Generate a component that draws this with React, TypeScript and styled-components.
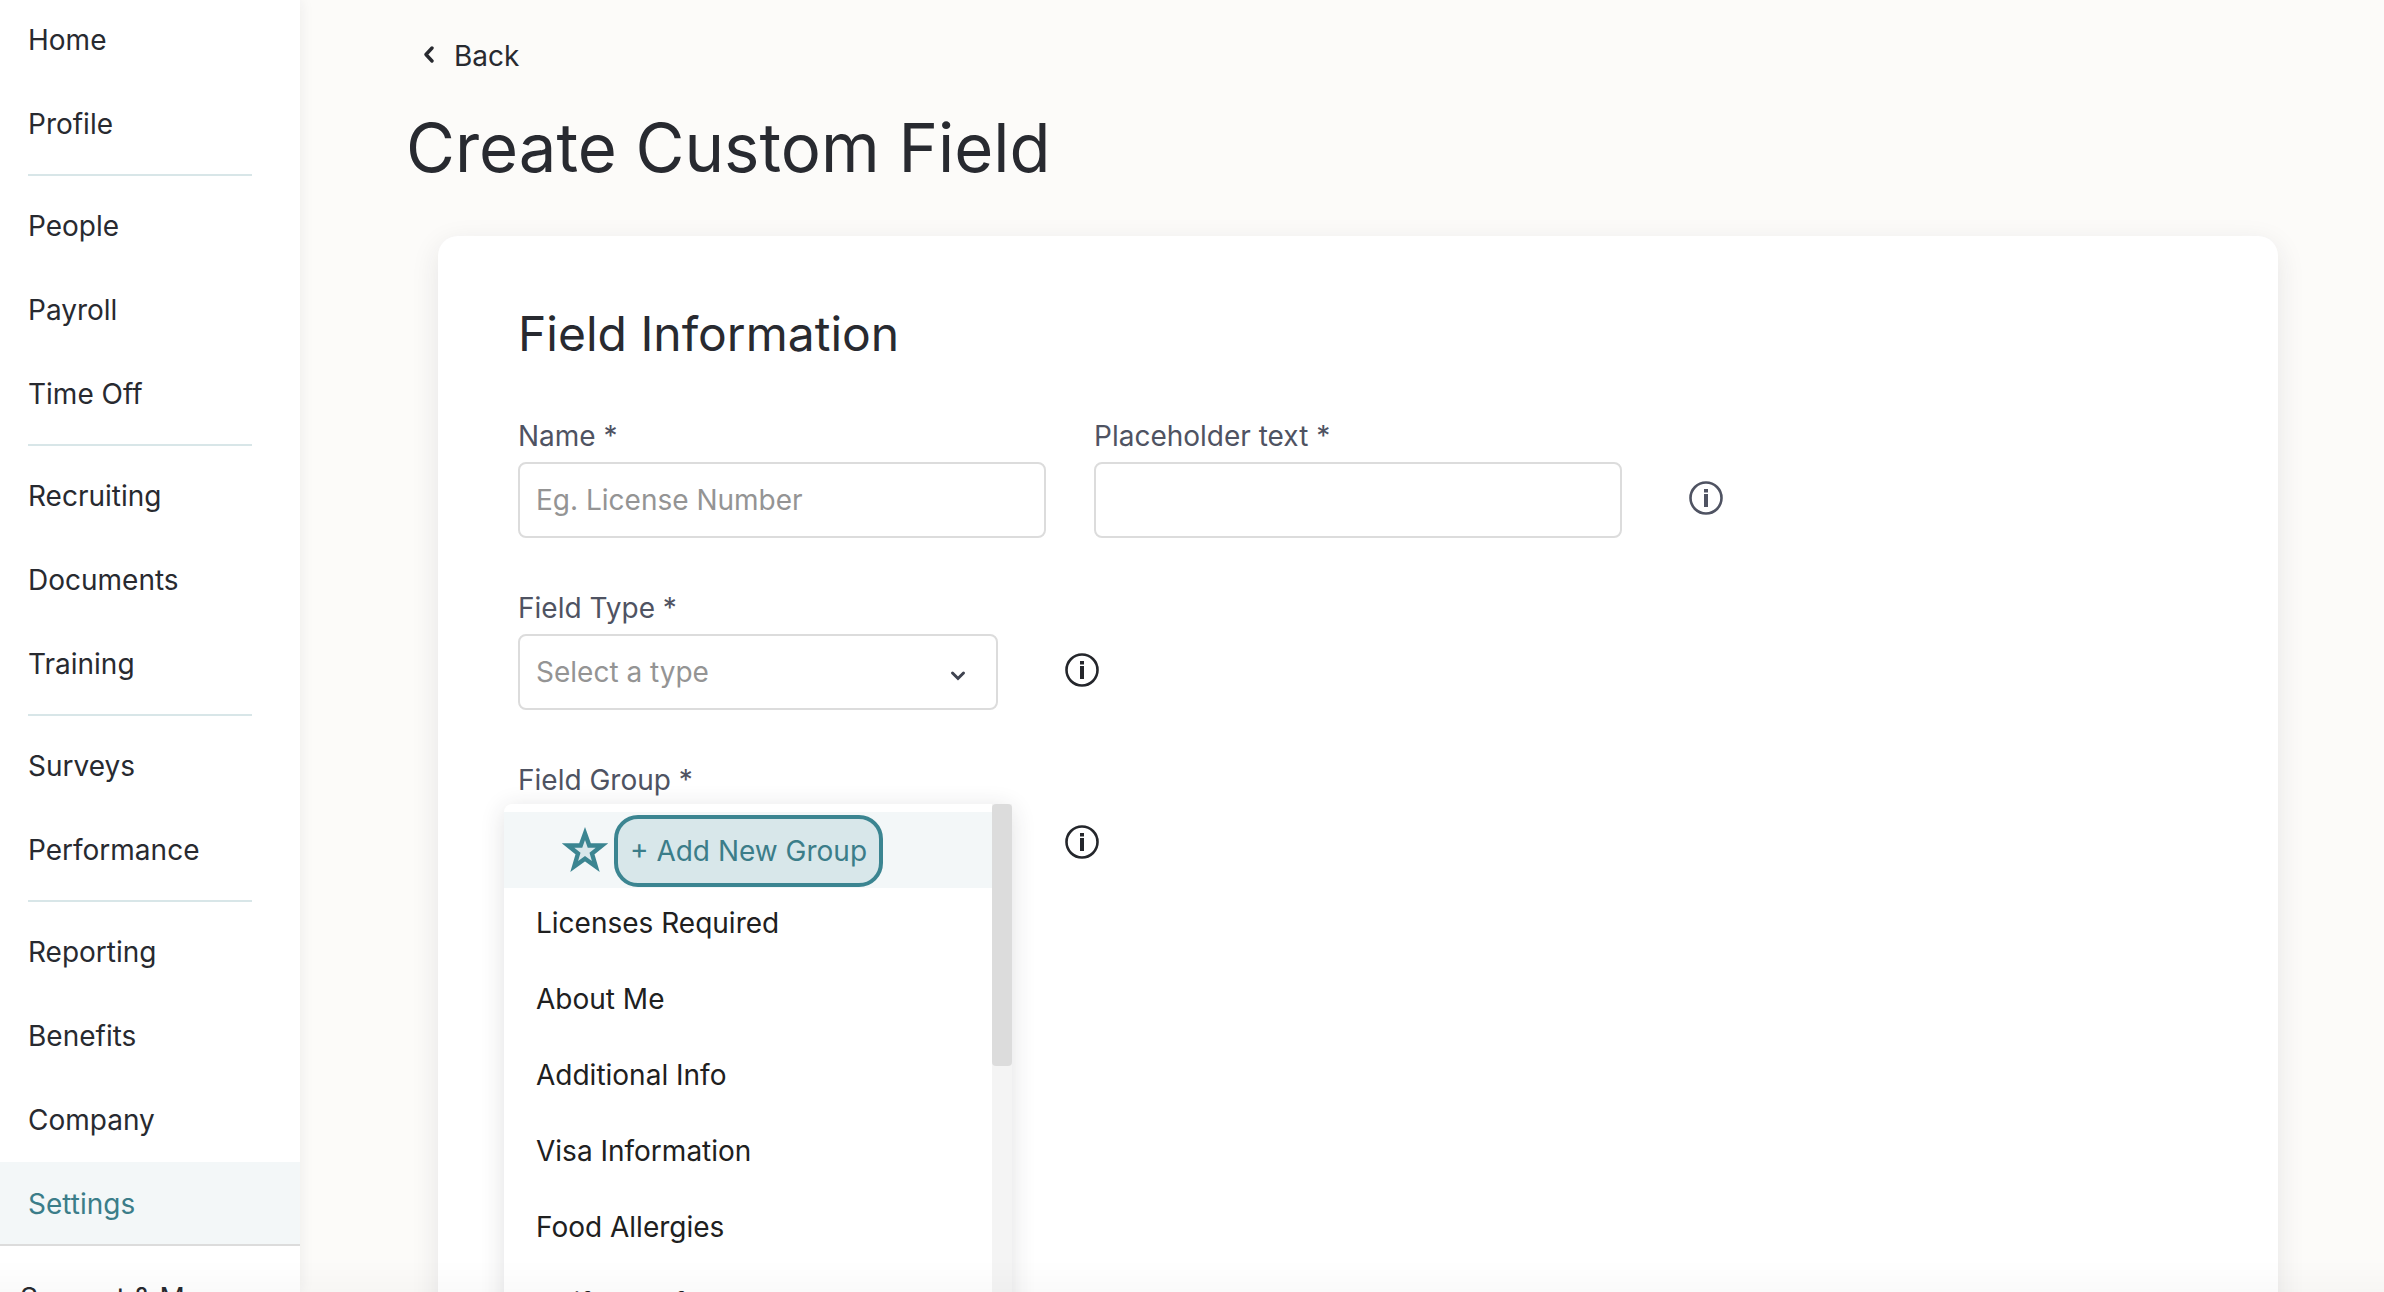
import React from "react";
import styled, { createGlobalStyle } from "styled-components";

const Global = createGlobalStyle`
  *, *::before, *::after { box-sizing: border-box; }
  html, body, #root { height: 100%; }
  body {
    margin: 0;
    overflow: hidden;
    background: #fcfbf9;
    color: #282a30;
    font: 400 28px/40px Inter, "Liberation Sans", sans-serif;
    -webkit-font-smoothing: antialiased;
  }
`;

const Shell = styled.div`
  display: flex;
  height: 100vh;
  overflow: hidden;
`;

const Sidebar = styled.aside`
  display: flex;
  flex: 0 0 300px;
  flex-direction: column;
  background: #fff;
  box-shadow: 0 0 14px rgba(40, 42, 48, 0.08);
`;

const NavList = styled.nav`
  display: flex;
  flex-direction: column;
  margin-top: -2px;
`;

const NavLink = styled.a<{ $active?: boolean }>`
  display: flex;
  flex: none;
  align-items: center;
  height: 84px;
  padding: 0 28px;
  color: ${(p) => (p.$active ? "#3b7d89" : "#282a30")};
  background: ${(p) => (p.$active ? "#f3f7f8" : "transparent")};
  text-decoration: none;
`;

const Divider = styled.hr`
  flex: none;
  width: 224px;
  height: 2px;
  margin: 8px 28px;
  border: 0;
  background: #d8e6e8;
`;

const SidebarFooter = styled.div`
  flex: none;
  margin-top: -2px;
  padding: 32px 20px;
  border-top: 2px solid #dcdcdc;
  background: #fff;
`;

const FooterLink = styled.a`
  color: #282a30;
  text-decoration: none;
`;

const Main = styled.main`
  display: flex;
  flex: 1;
  flex-direction: column;
  min-width: 0;
  padding: 36px 106px 0;
`;

const BackLink = styled.a`
  display: flex;
  align-items: center;
  gap: 18px;
  padding-left: 16px;
  color: #282a30;
  text-decoration: none;
`;

const Title = styled.h1`
  margin: 32px 0 48px;
  font-size: 67px;
  font-weight: 400;
  line-height: 80px;
`;

const Card = styled.form`
  flex: 1 0 auto;
  min-height: 1200px;
  margin-left: 32px;
  padding: 68px 80px;
  border-radius: 20px;
  background: #fff;
  box-shadow: 0 8px 28px rgba(40, 42, 48, 0.1);
`;

const SectionTitle = styled.h2`
  margin: 0 0 52px;
  font-size: 48px;
  font-weight: 400;
  line-height: 60px;
`;

const FieldRow = styled.div`
  display: flex;
  align-items: flex-end;
  gap: 48px;
  margin-bottom: 50px;
`;

const Field = styled.div<{ $width: number }>`
  position: relative;
  display: flex;
  flex: 0 1 ${(p) => p.$width}px;
  flex-direction: column;
  gap: 6px;
`;

const Label = styled.label`
  color: #4f5362;
`;

const Control = styled.input`
  width: 100%;
  height: 76px;
  padding: 0 16px;
  border: 2px solid #dcdcdc;
  border-radius: 8px;
  background: #fff;
  color: #282a30;
  font: inherit;
  &::placeholder { color: #949494; opacity: 1; }
`;

const SelectWrap = styled.div`
  position: relative;
`;

const Select = styled.select`
  display: block;
  width: 100%;
  height: 76px;
  padding: 0 16px;
  border: 2px solid #dcdcdc;
  border-radius: 8px;
  appearance: none;
  background: #fff;
  color: #949494;
  font: inherit;
`;

const SelectArrow = styled.svg`
  position: absolute;
  top: 36px;
  right: 32px;
  pointer-events: none;
`;

const InfoButton = styled.button<{ $tone: string }>`
  display: flex;
  margin: 0 0 22px 18px;
  padding: 0;
  border: 0;
  background: none;
  color: ${(p) => p.$tone};
`;

const Menu = styled.div`
  position: absolute;
  top: 44px;
  left: -14px;
  display: flex;
  width: 508px;
  height: 800px;
  border-radius: 8px;
  background: #fff;
  box-shadow: 0 4px 24px rgba(40, 42, 48, 0.14);
`;

const MenuList = styled.div`
  flex: 1;
  padding-top: 8px;
`;

const MenuItem = styled.div`
  display: flex;
  align-items: center;
  height: 76px;
  padding: 0 32px 6px;
  color: #202020;
`;

const NewGroupItem = styled(MenuItem)`
  gap: 4px;
  padding: 2px 56px 0;
  background: #f3f7f8;
`;

const NewGroupButton = styled.button`
  height: 72px;
  padding: 0 12px;
  border: 4px solid #3b8591;
  border-radius: 24px;
  background: #d8e7ea;
  color: #3b7d89;
  font: inherit;
  white-space: nowrap;
`;

const ScrollTrack = styled.div`
  flex: 0 0 20px;
  background: #f4f4f4;
`;

const ScrollThumb = styled.div`
  height: 262px;
  border-radius: 4px;
  background: #dcdcdc;
`;

const BottomFade = styled.div`
  position: fixed;
  inset: auto 0 0;
  height: 32px;
  background: linear-gradient(rgba(0, 0, 0, 0), rgba(0, 0, 0, 0.02));
  pointer-events: none;
`;

const NAV = [
  ["Home", "Profile"],
  ["People", "Payroll", "Time Off"],
  ["Recruiting", "Documents", "Training"],
  ["Surveys", "Performance"],
  ["Reporting", "Benefits", "Company", "Settings"],
];

const GROUPS = ["Licenses Required", "About Me", "Additional Info", "Visa Information", "Food Allergies", "Uniform Info"];

function Info({ tone }: { tone: string }) {
  return (
    <InfoButton type="button" aria-label="More information" $tone={tone}>
      <svg width="36" height="36" viewBox="0 0 36 36" fill="none">
        <circle cx="18" cy="18" r="15.5" stroke="currentColor" strokeWidth="2.6" />
        <path d="M16 9h4v3.500h-4zM16 14h4V27h-4z" fill="currentColor" />
      </svg>
    </InfoButton>
  );
}

export default function App() {
  return (
    <>
      <Global />
      <Shell>
        <Sidebar>
          <NavList>
            {NAV.map((group, i) => (
              <React.Fragment key={i}>
                {i > 0 && <Divider />}
                {group.map((name) => (
                  <NavLink key={name} href="#" $active={name === "Settings"}>{name}</NavLink>
                ))}
              </React.Fragment>
            ))}
          </NavList>
          <SidebarFooter>
            <FooterLink href="#">Support &amp; More</FooterLink>
          </SidebarFooter>
        </Sidebar>
        <Main>
          <BackLink href="#">
            <svg width="14" height="20" viewBox="0 0 14 20" fill="none">
              <path d="M10 2 4 8.500l6 6.500" stroke="currentColor" strokeWidth="3.400" strokeLinecap="round" strokeLinejoin="round" />
            </svg>
            Back
          </BackLink>
          <Title>Create Custom Field</Title>
          <Card>
            <SectionTitle>Field Information</SectionTitle>
            <FieldRow>
              <Field $width={528}>
                <Label htmlFor="name">Name *</Label>
                <Control id="name" placeholder="Eg. License Number" />
              </Field>
              <Field $width={528}>
                <Label htmlFor="placeholder">Placeholder text *</Label>
                <Control id="placeholder" />
              </Field>
              <Info tone="#4f5362" />
            </FieldRow>
            <FieldRow>
              <Field $width={480}>
                <Label htmlFor="type">Field Type *</Label>
                <SelectWrap>
                  <Select id="type"><option>Select a type</option></Select>
                  <SelectArrow width="16" height="12" viewBox="0 0 16 12" fill="none">
                    <path d="m2.500 3 5.500 5.500L13.500 3" stroke="#3f4350" strokeWidth="3" strokeLinecap="round" />
                  </SelectArrow>
                </SelectWrap>
              </Field>
              <Info tone="#24262b" />
            </FieldRow>
            <FieldRow>
              <Field $width={480}>
                <Label htmlFor="group">Field Group *</Label>
                <Select id="group"><option>Select a group</option></Select>
                <Menu>
                  <MenuList>
                    <NewGroupItem>
                      <svg width="50" height="50" viewBox="0 0 50 50">
                        <path d="M25 7.500 29.300 19.500H42L32 27.500 35.800 40.500 25 32.800 14.200 40.500 18 27.500 8 19.500H20.700Z" fill="#d8e7ea" stroke="#3b8591" strokeWidth="4.400" strokeMiterlimit="8" />
                      </svg>
                      <NewGroupButton type="button">+ Add New Group</NewGroupButton>
                    </NewGroupItem>
                    {GROUPS.map((g) => <MenuItem key={g}>{g}</MenuItem>)}
                  </MenuList>
                  <ScrollTrack><ScrollThumb /></ScrollTrack>
                </Menu>
              </Field>
              <Info tone="#24262b" />
            </FieldRow>
          </Card>
        </Main>
      </Shell>
      <BottomFade />
    </>
  );
}
